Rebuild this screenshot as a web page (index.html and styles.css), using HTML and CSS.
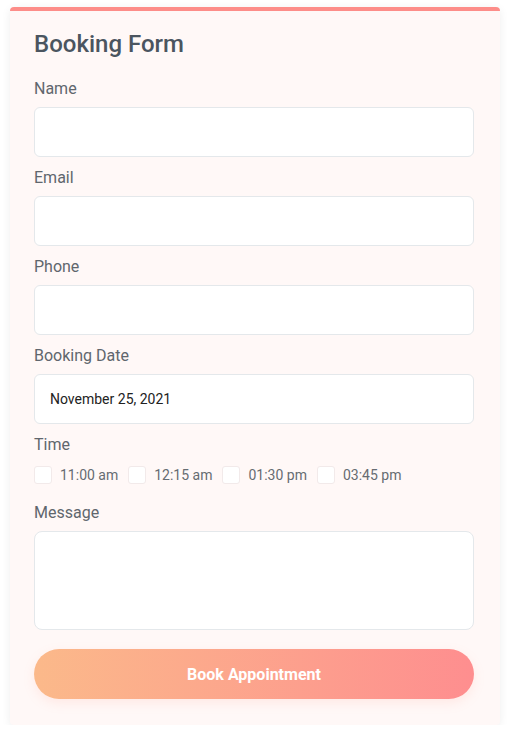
FILE: index.html
```html
<!DOCTYPE html>
<html>
<head>
<meta charset="utf-8">
<link rel="stylesheet" href="styles.css">
</head>
<body>
<form class="card">
  <h1 class="title">Booking Form</h1>
  <div class="field">
    <label class="label">Name</label>
    <div class="input"></div>
  </div>
  <div class="field">
    <label class="label">Email</label>
    <div class="input"></div>
  </div>
  <div class="field">
    <label class="label">Phone</label>
    <div class="input"></div>
  </div>
  <div class="field">
    <label class="label">Booking Date</label>
    <div class="input date">November 25, 2021</div>
  </div>
  <div class="field time-field">
    <label class="label">Time</label>
    <div class="times">
      <span class="opt"><span class="box"></span>11:00 am</span>
      <span class="opt"><span class="box"></span>12:15 am</span>
      <span class="opt"><span class="box"></span>01:30 pm</span>
      <span class="opt"><span class="box"></span>03:45 pm</span>
    </div>
  </div>
  <div class="field">
    <label class="label">Message</label>
    <div class="input textarea"></div>
  </div>
  <div class="button">Book Appointment</div>
</form>
</body>
</html>
```
FILE: styles.css
```css
html, body {
  margin: 0;
  padding: 0;
  background: #ffffff;
  font-family: Roboto, "Liberation Sans", sans-serif;
}
body {
  padding: 7px 11px 0 10px;
}
.card {
  display: block;
  background: #fff8f7;
  border-top: 4px solid #fd8d89;
  border-radius: 4px;
  box-shadow: 0 2px 10px rgba(0, 0, 0, 0.07);
  padding: 19px 26px 26px 24px;
  box-sizing: border-box;
  width: 490px;
}
.title {
  margin: 0 0 21px 0;
  font-size: 24px;
  line-height: 28px;
  font-weight: 500;
  color: #4b5560;
}
.field {
  margin-bottom: 11px;
}
.label {
  display: block;
  font-size: 16px;
  line-height: 20px;
  color: #60666d;
  margin-bottom: 8px;
}
.input {
  height: 50px;
  box-sizing: border-box;
  background: #ffffff;
  border: 1px solid #e4e8eb;
  border-radius: 6px;
}
.date {
  display: flex;
  align-items: center;
  padding-left: 15px;
  font-size: 14px;
  color: #222222;
}
.textarea {
  height: 99px;
  border-radius: 8px;
}
.time-field {
  margin-bottom: 19px;
}
.times {
  display: flex;
  gap: 10px;
  margin-top: 11px;
}
.opt {
  display: flex;
  align-items: center;
  gap: 8px;
  font-size: 14px;
  line-height: 18px;
  color: #666c72;
}
.box {
  width: 18px;
  height: 18px;
  box-sizing: border-box;
  background: #ffffff;
  border: 1px solid #f2eaea;
  border-radius: 3px;
}
.button {
  margin-top: 19px;
  height: 50px;
  border-radius: 25px;
  background: linear-gradient(90deg, #fbb98a 0%, #fe8e8f 100%);
  box-shadow: 0 4px 12px rgba(253, 150, 130, 0.15);
  display: flex;
  align-items: center;
  justify-content: center;
  color: #ffffff;
  font-weight: 700;
  font-size: 16px;
}
```
